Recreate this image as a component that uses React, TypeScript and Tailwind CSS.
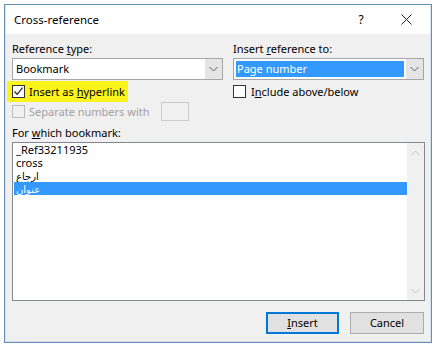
import React from "react";

const font = { fontFamily: '"Segoe UI", "Noto Sans", "DejaVu Sans", sans-serif' };

function Chevron({ up = false, color = "#606060" }: { up?: boolean; color?: string }) {
  return (
    <svg width="9" height="6" viewBox="0 0 9 6" className="block">
      <path
        d={up ? "M0.5 5 L4.5 1 L8.5 5" : "M0.5 1 L4.5 5 L8.5 1"}
        fill="none"
        stroke={color}
        strokeWidth="1"
      />
    </svg>
  );
}

function CheckBox({ checked = false, disabled = false }: { checked?: boolean; disabled?: boolean }) {
  return (
    <div
      className={
        "w-[13px] h-[13px] shrink-0 border flex items-center justify-center " +
        (disabled ? "border-[#bcbcbc] bg-[#f0f0f0]" : "border-[#333333] bg-white")
      }
    >
      {checked && (
        <svg width="11" height="11" viewBox="0 0 11 11" className="block">
          <path d="M1.5 5.5 L4.2 8.3 L9.6 1.6" fill="none" stroke="#222" strokeWidth="1.2" />
        </svg>
      )}
    </div>
  );
}

export default function App() {
  return (
    <div
      className="w-[438px] h-[349px] bg-white pt-[4px] pl-[4px] text-[11px] leading-[16px] text-black whitespace-nowrap"
      style={font}
    >
      <div className="w-[428px] h-[339px] border border-[#6a8cb4] flex flex-col">
        {/* title bar */}
        <div className="h-[29px] bg-white flex items-center border-x border-[#d7e5f4]">
          <div className="pl-[8px] flex-1 text-[11.5px]">Cross-reference</div>
          <div className="w-[20px] text-center mr-[25px] text-[12px]">?</div>
          <div className="w-[20px] flex justify-center mr-[14px]">
            <svg width="11" height="11" viewBox="0 0 11 11" className="block">
              <path d="M0.5 0.5 L10.5 10.5 M10.5 0.5 L0.5 10.5" stroke="#222" strokeWidth="1" />
            </svg>
          </div>
        </div>
        {/* body */}
        <div className="flex-1 bg-[#f0f0f0] border-x border-b border-[#d3e2f3] pl-[6px] pr-[5px] pt-[7px] flex flex-col">
          <div className="flex gap-[10px]">
            {/* left column */}
            <div className="w-[211px] flex flex-col">
              <div className="h-[16px]">
                Reference <span className="underline">t</span>ype:
              </div>
              <div className="mt-[1px] h-[22px] border border-[#a6a6a6] bg-white flex">
                <div className="flex-1 pl-[3px] flex items-center">Bookmark</div>
                <div className="w-[17px] bg-[#e5e5e5] flex items-center justify-center">
                  <Chevron />
                </div>
              </div>
              <div className="mt-[1px] -ml-[5px] w-[121px] h-[21px] bg-[#fbf31c] flex items-center pl-[5px]">
                <CheckBox checked />
                <span className="ml-[4px]">
                  Insert as <span className="underline">h</span>yperlink
                </span>
              </div>
              <div className="h-[19px] flex items-center">
                <CheckBox disabled />
                <span className="ml-[4px] text-[#a0a0a0]">Separate numbers with</span>
                <div className="ml-auto mr-[34px] w-[28px] h-[19px] border border-[#cccccc] bg-[#f0f0f0]" />
              </div>
            </div>
            {/* right column */}
            <div className="w-[191px] flex flex-col">
              <div className="h-[16px]">
                Insert <span className="underline">r</span>eference to:
              </div>
              <div className="mt-[1px] h-[22px] border border-[#a6a6a6] bg-white flex">
                <div className="flex-1 p-[2px] flex">
                  <div className="flex-1 bg-[#3399ff] text-white pl-[1px] flex items-center">Page number</div>
                </div>
                <div className="w-[17px] bg-[#e5e5e5] flex items-center justify-center">
                  <Chevron />
                </div>
              </div>
              <div className="mt-[1px] h-[21px] flex items-center">
                <CheckBox />
                <span className="ml-[5px]">
                  I<span className="underline">n</span>clude above/below
                </span>
              </div>
            </div>
          </div>
          <div className="mt-[4px] h-[16px]">
            For <span className="underline">w</span>hich bookmark:
          </div>
          <div className="mt-[1px] w-[413px] h-[159px] border border-[#828790] bg-white flex">
            <div className="flex-1 pl-[1px] flex flex-col text-[11px] leading-[13px]">
              <div className="h-[13px] pl-[2px]">_Ref33211935</div>
              <div className="h-[13px] pl-[2px]">cross</div>
              <div className="h-[13px] pl-[2px] overflow-hidden flex items-center">
                <span className="text-[10px] leading-[12px]">ارجاع</span>
              </div>
              <div className="h-[13px] pl-[2px] bg-[#3399ff] text-white overflow-hidden flex items-center">
                <span className="text-[10px] leading-[12px]">عنوان</span>
              </div>
            </div>
            <div className="w-[17px] bg-[#f0f0f0] flex flex-col items-center justify-between pt-[7px] pb-[6px]">
              <Chevron up color="#c2c2c2" />
              <Chevron color="#c2c2c2" />
            </div>
          </div>
          <div className="mt-[11px] flex justify-end gap-[11px] mr-[1px]">
            <div className="w-[73px] h-[22px] border-2 border-[#0078d7] bg-[#e1e1e1] flex items-center justify-center">
              <span>
                <span className="underline">I</span>nsert
              </span>
            </div>
            <div className="w-[74px] h-[22px] border border-[#adadad] bg-[#e1e1e1] flex items-center justify-center">
              Cancel
            </div>
          </div>
        </div>
      </div>
    </div>
  );
}
